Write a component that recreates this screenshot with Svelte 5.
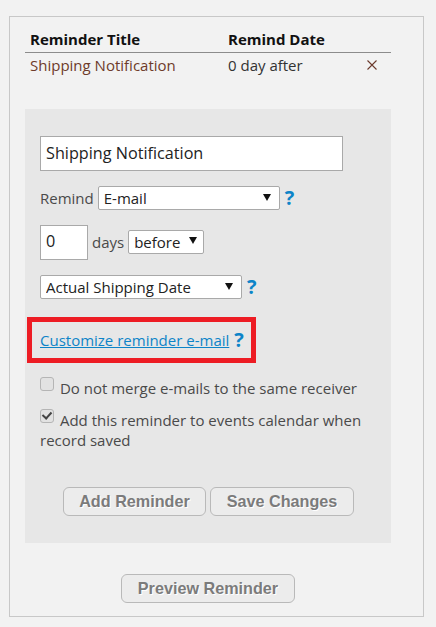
<script>
  const title = 'Shipping Notification';
</script>

<div class="page">
  <div class="card">
    <div class="row head">
      <div class="c1">Reminder Title</div>
      <div class="c2">Remind Date</div>
    </div>
    <div class="row item">
      <div class="c1 name">{title}</div>
      <div class="c2">0 day after</div>
      <svg class="x" width="10" height="10" viewBox="0 0 10 10" aria-label="Remove"><path d="M0.5 0.5 9.5 9.5M9.5 0.5 0.5 9.5" stroke="#6b3a2c" stroke-width="1.1" fill="none"/></svg>
    </div>

    <div class="panel">
      <input class="title" type="text" value={title} />

      <div class="line remind">
        <span class="lbl">Remind</span>
        <label class="sel w-remind">
          <select><option>E-mail</option></select>
        </label>
        <span class="q">?</span>
      </div>

      <div class="line days">
        <input class="num" type="text" value="0" />
        <span class="lbl">days</span>
        <label class="sel w-before">
          <select><option>before</option></select>
        </label>
      </div>

      <div class="line actual">
        <label class="sel w-actual">
          <select><option>Actual Shipping Date</option></select>
        </label>
        <span class="q">?</span>
      </div>

      <div class="callout">
        <a href="#customize">Customize reminder e-mail</a>
        <span class="q">?</span>
      </div>

      <label class="check first">
        <input type="checkbox" />
        Do not merge e-mails to the same receiver
      </label>
      <label class="check second">
        <input type="checkbox" checked />
        Add this reminder to events calendar when record saved
      </label>

      <div class="actions">
        <button class="add">Add Reminder</button>
        <button class="save">Save Changes</button>
      </div>
    </div>

    <div class="preview">
      <button class="prev">Preview Reminder</button>
    </div>
  </div>
</div>

<style>
  :global(body) {
    margin: 0;
    background: #f2f2f2;
  }
  .page {
    box-sizing: border-box;
    width: 436px;
    height: 627px;
    padding: 16px 12px 0 9px;
    font-family: 'Open Sans', sans-serif;
    font-size: 15px;
    color: #444;
  }
  .card {
    box-sizing: border-box;
    height: 601px;
    border: 1px solid #c8c8c8;
    padding: 0 32px 0 15px;
  }
  .row {
    display: flex;
    align-items: center;
    position: relative;
  }
  .head {
    height: 36px;
    align-items: flex-end;
    padding-bottom: 3px;
    box-sizing: border-box;
    border-bottom: 1px solid #8c8c8c;
    font-weight: 700;
    color: #111;
  }
  .c1 {
    width: 203px;
    padding-left: 5px;
    box-sizing: border-box;
  }
  .item {
    height: 26px;
    padding-bottom: 2px;
    box-sizing: border-box;
    color: #333;
  }
  .name {
    color: #6e3b2a;
  }
  .x {
    position: absolute;
    left: 342px;
    top: 7px;
  }
  .panel {
    box-sizing: border-box;
    margin-top: 30px;
    height: 434px;
    background: #e7e7e7;
    padding: 27px 15px 0;
  }
  input[type='text'],
  select {
    font-family: inherit;
    color: #222;
    background: #fff;
    border: 1px solid #a9a9a9;
    box-sizing: border-box;
    border-radius: 0;
    outline: none;
  }
  .title {
    display: block;
    width: 303px;
    height: 35px;
    padding: 0 5px 2px;
    font-size: 16.2px;
  }
  .line {
    display: flex;
    align-items: center;
  }
  .remind {
    margin-top: 15px;
    height: 24px;
  }
  .lbl {
    color: #4a4a4a;
  }
  .sel {
    display: block;
    position: relative;
  }
  .sel::after {
    content: '';
    position: absolute;
    right: 9px;
    top: 8px;
    border-left: 4px solid transparent;
    border-right: 4px solid transparent;
    border-top: 7px solid #111;
  }
  .sel select {
    display: block;
    appearance: none;
    width: 100%;
    height: 24px;
    padding: 0 5px;
    font-size: 15px;
    border-radius: 2px;
  }
  .w-remind {
    width: 182px;
    margin-left: 4px;
  }
  .w-before {
    width: 76px;
    margin: 0 0 1px 4px;
  }
  .w-before::after {
    right: 7px;
    top: 7px;
  }
  .w-actual {
    width: 202px;
  }
  .q {
    font-size: 20px;
    font-weight: 700;
    color: #0d84c8;
    line-height: 24px;
    margin-left: 5px;
  }
  .days {
    margin-top: 15px;
    height: 35px;
  }
  .num {
    width: 48px;
    height: 35px;
    padding: 0 5px 3px;
    font-size: 16.2px;
  }
  .days .lbl {
    margin: 0 0 1px 4px;
  }
  .actual {
    margin-top: 15px;
    height: 24px;
  }
  .callout {
    box-sizing: border-box;
    width: 229px;
    height: 46px;
    margin: 18px 0 0 -13px;
    border: 5px solid #ed1c24;
    padding-left: 8px;
    padding-bottom: 1px;
    display: flex;
    align-items: center;
  }
  .callout a {
    color: #0d84c8;
    text-decoration: underline;
  }
  .check {
    display: block;
    line-height: 20px;
    color: #4a4a4a;
  }
  .check input {
    appearance: none;
    box-sizing: border-box;
    width: 14px;
    height: 14px;
    margin: 0 2px 0 0;
    vertical-align: 2px;
    border: 1px solid #b5b5b5;
    border-radius: 3px;
    background: #e2e2e2;
    position: relative;
    top: -1px;
  }
  .check input:checked::after {
    content: '';
    position: absolute;
    left: 3px;
    top: 0;
    width: 4px;
    height: 7px;
    border: solid #444;
    border-width: 0 2px 2px 0;
    transform: rotate(42deg);
  }
  .first {
    margin-top: 15px;
  }
  .second {
    margin-top: 12px;
  }
  button {
    font-family: 'Liberation Sans', Arial, sans-serif;
    font-size: 16.2px;
    font-weight: 700;
    color: #7b7b7b;
    text-shadow: 1px 1px 0 #fff;
    background: #ececec;
    border: 1px solid #b9b9b9;
    border-radius: 6px;
    height: 29px;
    padding: 0;
    box-sizing: border-box;
  }
  .actions {
    display: flex;
    gap: 4px;
    margin-top: 37px;
    padding-left: 23px;
  }
  .add {
    width: 143px;
  }
  .save {
    width: 144px;
  }
  .preview {
    margin-top: 31px;
    padding-left: 96px;
  }
  .prev {
    width: 174px;
    display: block;
  }
</style>
